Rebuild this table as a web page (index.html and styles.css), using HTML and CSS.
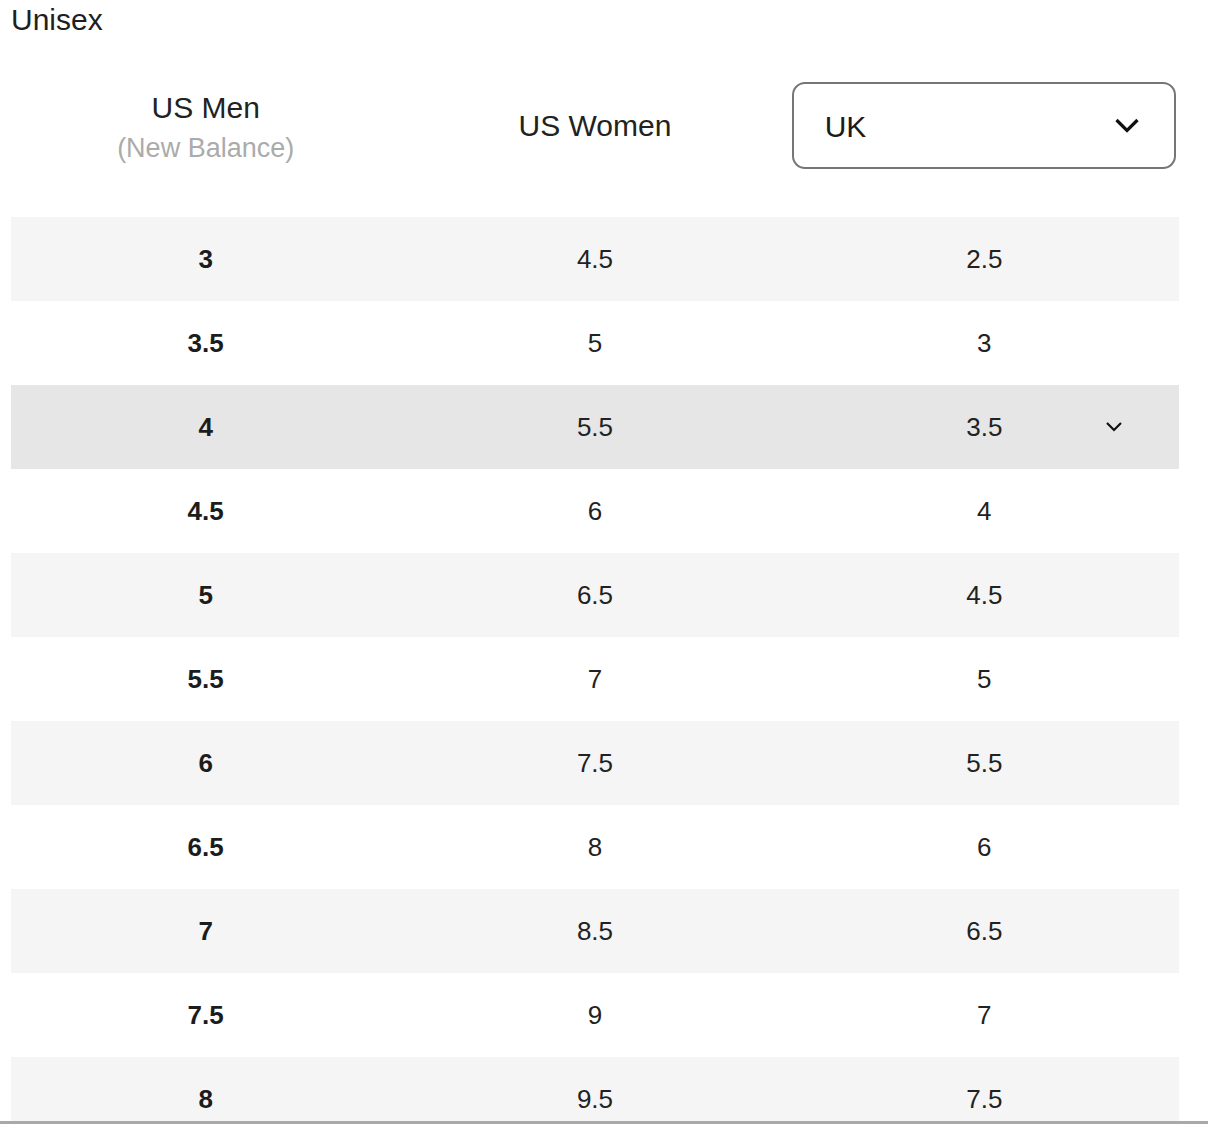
FILE: index.html
```html
<!DOCTYPE html>
<html lang="en">
<head>
<meta charset="utf-8">
<title>Size chart</title>
<link rel="stylesheet" href="styles.css">
</head>
<body>
<div class="page">
  <div class="title">Unisex</div>
  <div class="head">
    <div class="hcol hcol-first">
      <div class="hmain">US Men</div>
      <div class="hsub">(New Balance)</div>
    </div>
    <div class="hcol">
      <div class="hmain">US Women</div>
    </div>
    <div class="hcol hcol-select">
      <div class="select">
        <span class="select-label">UK</span>
        <svg class="select-chev" width="26" height="17" viewBox="0 0 26 17"><path d="M2.5 3 L13 13.5 L23.5 3" fill="none" stroke="#111" stroke-width="3.2"/></svg>
      </div>
    </div>
  </div>
  <div class="table">
    <div class="row alt"><div class="c b">3</div><div class="c">4.5</div><div class="c">2.5</div></div>
    <div class="row"><div class="c b">3.5</div><div class="c">5</div><div class="c">3</div></div>
    <div class="row hover"><div class="c b">4</div><div class="c">5.5</div><div class="c">3.5</div>
      <svg class="row-chev" width="18" height="11" viewBox="0 0 18 11"><path d="M2 2 L9 9 L16 2" fill="none" stroke="#111" stroke-width="2.2"/></svg>
    </div>
    <div class="row"><div class="c b">4.5</div><div class="c">6</div><div class="c">4</div></div>
    <div class="row alt"><div class="c b">5</div><div class="c">6.5</div><div class="c">4.5</div></div>
    <div class="row"><div class="c b">5.5</div><div class="c">7</div><div class="c">5</div></div>
    <div class="row alt"><div class="c b">6</div><div class="c">7.5</div><div class="c">5.5</div></div>
    <div class="row"><div class="c b">6.5</div><div class="c">8</div><div class="c">6</div></div>
    <div class="row alt"><div class="c b">7</div><div class="c">8.5</div><div class="c">6.5</div></div>
    <div class="row"><div class="c b">7.5</div><div class="c">9</div><div class="c">7</div></div>
    <div class="row alt"><div class="c b">8</div><div class="c">9.5</div><div class="c">7.5</div></div>
  </div>
</div>
<div class="bottom-bar"></div>
</body>
</html>
```
FILE: styles.css
```css
html, body {
  margin: 0;
  padding: 0;
  background: #fff;
}
body {
  font-family: "Liberation Sans", Arial, Helvetica, sans-serif;
  color: #222;
}
.page {
  width: 1168px;
  padding-left: 11px;
}
.title {
  font-size: 30px;
  line-height: 36px;
  margin-top: 2px;
  color: #1f1f1f;
}
.head {
  margin-top: 44px;
  height: 86px;
  display: grid;
  grid-template-columns: 1fr 1fr 1fr;
  align-items: center;
}
.hcol {
  text-align: center;
}
.hcol-first {
  padding-top: 5px;
}
.hmain {
  font-size: 30px;
  line-height: 40px;
  color: #222;
}
.hsub {
  font-size: 27px;
  line-height: 40px;
  color: #ababab;
}
.hcol-select {
  padding: 0 3px 0 2px;
}
.select {
  box-sizing: border-box;
  height: 87px;
  border: 2px solid #767676;
  border-radius: 13px;
  display: flex;
  align-items: center;
  justify-content: space-between;
  padding: 0 34px 0 31px;
}
.select-label {
  font-size: 30px;
  color: #1a1a1a;
  padding-top: 2px;
}
.select-chev {
  display: block;
}
.table {
  margin-top: 49px;
}
.row {
  position: relative;
  height: 84px;
  display: grid;
  grid-template-columns: 1fr 1fr 1fr;
  align-items: center;
  background: #fff;
}
.row.alt {
  background: #f5f5f5;
}
.row.hover {
  background: #e6e6e6;
}
.c {
  text-align: center;
  font-size: 26px;
  color: #222;
}
.c.b {
  font-weight: bold;
  color: #1c1c1c;
}
.row-chev {
  position: absolute;
  right: 56px;
  top: 36px;
}
.bottom-bar {
  position: fixed;
  left: 0;
  right: 0;
  bottom: 0;
  height: 3px;
  background: #a9a9a9;
}
```
